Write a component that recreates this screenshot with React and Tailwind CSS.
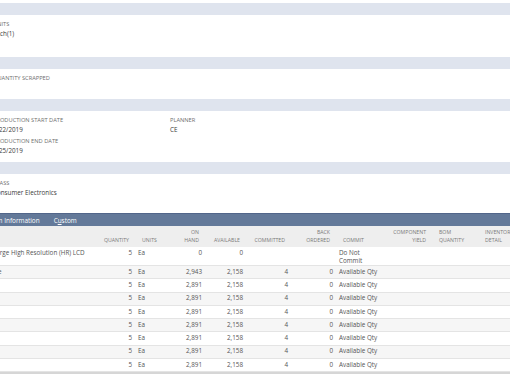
import React from 'react'

const label = 'block text-[5.7px] leading-[9px] uppercase text-[#6e6e6e]'
const value = 'block text-[6.3px] leading-[9px] text-[#3a3a3a]'

function Band() {
  return <div className="h-[12px] bg-[#dfe4ee]" />
}

function Field({ name, val, className = '' }) {
  return (
    <div className={className}>
      <span className={label}>{name}</span>
      {val && <span className={value}>{val}</span>}
    </div>
  )
}

const cols = [
  { key: 'desc', head: [], align: 'left' },
  { key: 'qty', head: ['Quantity'], align: 'right' },
  { key: 'units', head: ['Units'], align: 'left' },
  { key: 'onhand', head: ['On', 'Hand'], align: 'right' },
  { key: 'avail', head: ['Available'], align: 'right' },
  { key: 'committed', head: ['Committed'], align: 'right' },
  { key: 'back', head: ['Back', 'Ordered'], align: 'right' },
  { key: 'commit', head: ['Commit'], align: 'left' },
  { key: 'yield', head: ['Component', 'Yield'], align: 'right' },
  { key: 'bom', head: ['BOM', 'Quantity'], align: 'left' },
  { key: 'inv', head: ['Inventory', 'Detail'], align: 'left' },
]

const grid = 'grid grid-cols-[107px_35px_33px_37px_41px_45px_45px_56px_40px_46px_62px]'

const rows = [
  { desc: 'Large High Resolution (HR) LCD', qty: '5', units: 'Ea', onhand: '0', avail: '0', committed: '', back: '', commit: ['Do Not', 'Commit'] },
  { desc: 'Tie', qty: '5', units: 'Ea', onhand: '2,943', avail: '2,158', committed: '4', back: '0', commit: ['Available Qty'] },
  ...Array.from({ length: 7 }, () => ({ desc: '', qty: '5', units: 'Ea', onhand: '2,891', avail: '2,158', committed: '4', back: '0', commit: ['Available Qty'] })),
]

function Cell({ col, children, head }) {
  const pad = col.key === 'desc'
    ? 'pl-0'
    : col.align === 'right'
      ? head ? 'pr-[6px] text-right' : 'pr-[3px] text-right'
      : head ? 'pl-[7px]' : 'pl-[3px]'
  return <div className={`${pad} whitespace-nowrap`}>{children}</div>
}

export default function App() {
  return (
    <div className="w-[510px] h-[382px] overflow-hidden bg-white font-['Open_Sans','Liberation_Sans',sans-serif]">
      <div className="ml-[-7px] w-[580px]">
        <div className="h-[3px]" />
        <Band />
        <div className="h-[42px] pt-[5px]">
          <Field name="Units" val="Each(1)" />
        </div>
        <Band />
        <div className="h-[30px] pt-[5px]">
          <Field name="Quantity Scrapped" />
        </div>
        <Band />
        <div className="h-[51px] pt-[5px] grid grid-cols-[177px_1fr]">
          <div className="flex flex-col gap-[2.5px]">
            <Field name="Production Start Date" val="4/22/2019" />
            <Field name="Production End Date" val="4/25/2019" />
          </div>
          <Field name="Planner" val="CE" />
        </div>
        <Band />
        <div className="h-[39px] pt-[5px]">
          <Field name="Class" val="Consumer Electronics" />
        </div>

        <div className="h-[13px] bg-[#637999] border-t border-[#52668a] flex items-center text-white text-[6.4px] leading-[9px]">
          <span className="ml-[-12px]">System Information</span>
          <span className="ml-[14px]">C<span className="underline">u</span>stom</span>
        </div>

        <div className={`${grid} h-[21px] bg-[#eeeeee] items-end pb-[2px] text-[5.2px] leading-[8.6px] uppercase text-[#7a7a7a]`}>
          {cols.map(c => (
            <Cell key={c.key} col={c} head>
              {c.head.map((h, i) => <div key={i}>{h}</div>)}
            </Cell>
          ))}
        </div>

        {rows.map((r, i) => (
          <div
            key={i}
            className={`${grid} border-b border-[#e4e4e4] text-[6.3px] leading-[8.7px] text-[#555555] ${i === 0 ? 'h-[19px] items-start pt-[1.5px]' : 'h-[13.25px] items-center'} ${i % 2 === 1 ? 'bg-[#f6f6f6]' : 'bg-white'}`}
          >
            {cols.map(c => (
              <Cell key={c.key} col={c}>
                {c.key === 'commit'
                  ? r.commit.map((t, j) => <div key={j}>{t}</div>)
                  : r[c.key] || ''}
              </Cell>
            ))}
          </div>
        ))}
        <div className="h-[2px] bg-[#d6d6d6]" />
      </div>
    </div>
  )
}
